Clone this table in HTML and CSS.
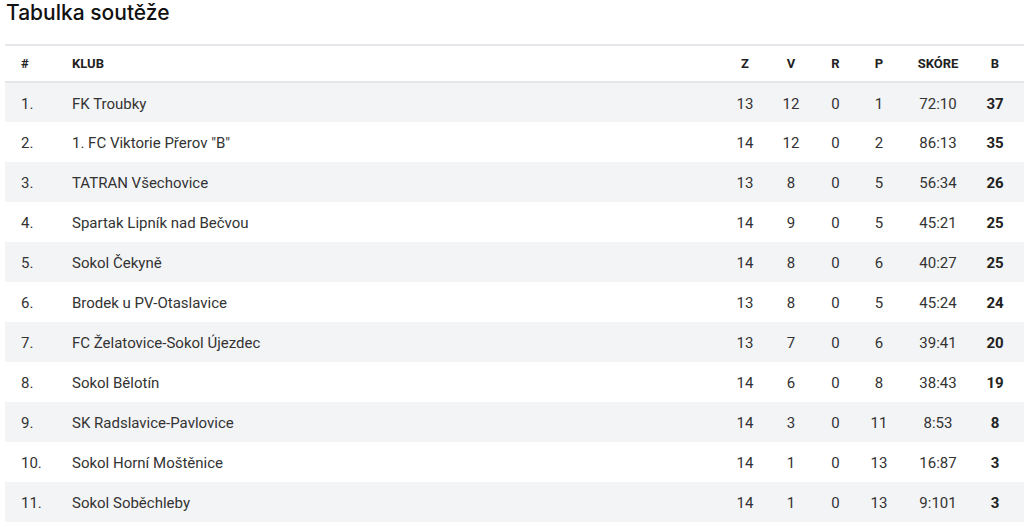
FILE: index.html
```html
<!DOCTYPE html>
<html lang="cs">
<head>
  <meta charset="UTF-8" />
  <title>Tabulka soutěže</title>
  <link rel="stylesheet" href="styles.css">
</head>
<body>
  <h2 class="title">Tabulka soutěže</h2>

  <table class="standings">
    <colgroup>
      <col class="c-rank"><col class="c-club"><col class="c-z"><col class="c-v">
      <col class="c-r"><col class="c-p"><col class="c-score"><col class="c-pts">
    </colgroup>
    <thead>
      <tr>
        <th class="rank">#</th>
        <th class="club">Klub</th>
        <th>Z</th>
        <th>V</th>
        <th>R</th>
        <th>P</th>
        <th>Skóre</th>
        <th class="pts">B</th>
      </tr>
    </thead>
    <tbody>
      <tr><td class="rank">1.</td><td class="club">FK Troubky</td><td>13</td><td>12</td><td>0</td><td>1</td><td>72:10</td><td class="pts">37</td></tr>
      <tr><td class="rank">2.</td><td class="club">1. FC Viktorie Přerov "B"</td><td>14</td><td>12</td><td>0</td><td>2</td><td>86:13</td><td class="pts">35</td></tr>
      <tr><td class="rank">3.</td><td class="club">TATRAN Všechovice</td><td>13</td><td>8</td><td>0</td><td>5</td><td>56:34</td><td class="pts">26</td></tr>
      <tr><td class="rank">4.</td><td class="club">Spartak Lipník nad Bečvou</td><td>14</td><td>9</td><td>0</td><td>5</td><td>45:21</td><td class="pts">25</td></tr>
      <tr><td class="rank">5.</td><td class="club">Sokol Čekyně</td><td>14</td><td>8</td><td>0</td><td>6</td><td>40:27</td><td class="pts">25</td></tr>
      <tr><td class="rank">6.</td><td class="club">Brodek u PV-Otaslavice</td><td>13</td><td>8</td><td>0</td><td>5</td><td>45:24</td><td class="pts">24</td></tr>
      <tr><td class="rank">7.</td><td class="club">FC Želatovice-Sokol Újezdec</td><td>13</td><td>7</td><td>0</td><td>6</td><td>39:41</td><td class="pts">20</td></tr>
      <tr><td class="rank">8.</td><td class="club">Sokol Bělotín</td><td>14</td><td>6</td><td>0</td><td>8</td><td>38:43</td><td class="pts">19</td></tr>
      <tr><td class="rank">9.</td><td class="club">SK Radslavice-Pavlovice</td><td>14</td><td>3</td><td>0</td><td>11</td><td>8:53</td><td class="pts">8</td></tr>
      <tr><td class="rank">10.</td><td class="club">Sokol Horní Moštěnice</td><td>14</td><td>1</td><td>0</td><td>13</td><td>16:87</td><td class="pts">3</td></tr>
      <tr><td class="rank">11.</td><td class="club">Sokol Soběchleby</td><td>14</td><td>1</td><td>0</td><td>13</td><td>9:101</td><td class="pts">3</td></tr>
    </tbody>
  </table>
</body>
</html>
```

FILE: styles.css
```css
/* Base */
body {
  margin: 0;
  padding: 0 0 0 5px;
  font-family: Roboto, "Noto Sans", sans-serif;
  color: #333;
  background: #fff;
}

.title {
  margin: 0 0 19px 1px;
  font-family: Inter, "Noto Sans", sans-serif;
  font-size: 21px;
  font-weight: 500;
  line-height: 25px;
  color: #111;
}

/* Standings table */
.standings {
  width: 1019px;
  border-collapse: collapse;
  table-layout: fixed;
  font-size: 15px;
}
.c-rank { width: 52px; }
.c-club { width: 665px; }
.c-z, .c-v { width: 46px; }
.c-r { width: 43px; }
.c-p { width: 44px; }
.c-score { width: 74px; }
.c-pts { width: 49px; }

.standings th,
.standings td {
  text-align: center;
  padding: 0;
}
.standings .rank {
  text-align: left;
  padding-left: 16px;
}
.standings .club {
  text-align: left;
  padding-left: 15px;
}
.standings .pts {
  padding-right: 9px;
}

.standings thead tr {
  height: 37px;
  border-top: 2px solid #e6e7ea;
  border-bottom: 2px solid #e6e7ea;
}
.standings th {
  font-size: 13px;
  font-weight: 700;
  text-transform: uppercase;
  color: #222;
}

.standings tbody tr {
  height: 40px;
}
.standings tbody td {
  padding-top: 2px;
}
.standings tbody tr:nth-child(odd) {
  background: #f3f4f6;
}
.standings td.pts {
  font-weight: 700;
  color: #222;
}
```
